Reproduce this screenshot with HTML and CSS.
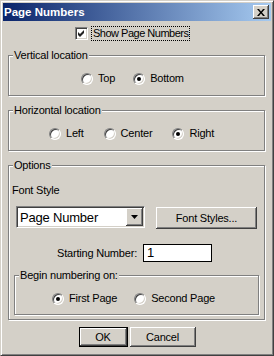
FILE: index.html
```html
<!DOCTYPE html>
<html lang="en">
<head>
  <meta charset="UTF-8" />
  <title>Page Numbers</title>
  <link rel="stylesheet" href="styles.css">
</head>
<body>
  <div class="window">
    <div class="titlebar">
      <span class="title">Page Numbers</span>
      <span class="close-btn">
        <svg width="8" height="7" viewBox="0 0 8 7"><polygon points="0,0 2,0 4,2.5 6,0 8,0 5,3.5 8,7 6,7 4,4.5 2,7 0,7 3,3.5" fill="#000"/></svg>
      </span>
    </div>

    <div class="dialog">
      <div class="check-row">
        <span class="checkbox">
          <svg width="7" height="7" viewBox="0 0 7 7"><polygon points="0,2 2,4 6,0 6,3 2,7 0,5" fill="#222"/></svg>
        </span>
        <span class="focus-label">Show Page Numbers</span>
      </div>

      <div class="group">
        <span class="group-title">Vertical location</span>
        <div class="radio-row vertical-row">
          <span class="radio-item"><span class="radio"></span>Top</span>
          <span class="radio-item"><span class="radio on"></span>Bottom</span>
        </div>
      </div>

      <div class="group">
        <span class="group-title">Horizontal location</span>
        <div class="radio-row horizontal-row">
          <span class="radio-item"><span class="radio"></span>Left</span>
          <span class="radio-item"><span class="radio"></span>Center</span>
          <span class="radio-item"><span class="radio on"></span>Right</span>
        </div>
      </div>

      <div class="group options">
        <span class="group-title">Options</span>
        <div class="field-label">Font Style</div>
        <div class="font-row">
          <div class="select">
            <span>Page Number</span>
            <span class="select-arrow">
              <svg width="7" height="4" viewBox="0 0 7 4"><polygon points="0,0 7,0 3.5,4" fill="#000"/></svg>
            </span>
          </div>
          <button class="btn font-btn">Font Styles...</button>
        </div>
        <div class="start-row">
          <span class="start-label">Starting Number:</span>
          <span class="text-input">1</span>
        </div>
        <div class="group inner-group">
          <span class="group-title">Begin numbering on:</span>
          <div class="radio-row begin-row">
            <span class="radio-item"><span class="radio on"></span>First Page</span>
            <span class="radio-item"><span class="radio"></span>Second Page</span>
          </div>
        </div>
      </div>

      <div class="button-row">
        <button class="btn btn-default">OK</button>
        <button class="btn cancel-btn">Cancel</button>
      </div>
    </div>
  </div>
</body>
</html>
```

FILE: styles.css
```css
* { box-sizing: border-box; }
body {
  margin: 0;
  background: #d4d0c8;
  font-family: 'Liberation Sans', Arial, sans-serif;
  font-size: 11px;
  line-height: 13px;
  letter-spacing: -0.2px;
  color: #000;
}
.window {
  width: 274px;
  height: 356px;
  padding: 2px;
  background: #d4d0c8;
  border: 1px solid;
  border-color: #d4d0c8 #404040 #404040 #d4d0c8;
  box-shadow: inset 1px 1px 0 #fff, inset -1px -1px 0 #808080;
}
.titlebar {
  height: 18px;
  display: flex;
  align-items: center;
  justify-content: space-between;
  padding: 0 2px 0 1px;
  background: linear-gradient(90deg, #0a246a, #a6caf0);
}
.title {
  color: #fff;
  font-weight: bold;
  font-size: 11.5px;
  letter-spacing: 0;
}
.close-btn {
  width: 16px;
  height: 14px;
  display: flex;
  align-items: center;
  justify-content: center;
  background: #d4d0c8;
  box-shadow: inset -1px -1px 0 #404040, inset 1px 1px 0 #fff, inset -2px -2px 0 #808080;
}
.dialog {
  padding-top: 5px;
}
.check-row {
  display: flex;
  align-items: center;
  height: 15px;
  margin-left: 72px;
  gap: 3px;
}
.checkbox {
  width: 13px;
  height: 13px;
  display: flex;
  align-items: center;
  justify-content: center;
  background: #fff;
  border: 1px solid;
  border-color: #808080 #fff #fff #808080;
  box-shadow: inset 1px 1px 0 #404040, inset -1px -1px 0 #d4d0c8;
}
.focus-label {
  border: 1px dotted #000;
  padding: 0 1px;
  letter-spacing: -0.5px;
}

.group {
  position: relative;
  height: 41px;
  margin: 14px 6px 0 5px;
  padding-top: 16px;
  border: 1px solid #808080;
  box-shadow: inset 1px 1px 0 #fff, 1px 1px 0 #fff;
}
.group-title {
  position: absolute;
  top: -7px;
  left: 4px;
  padding: 0 1px;
  background: #d4d0c8;
}
.radio-row {
  display: flex;
  align-items: center;
  height: 13px;
}
.vertical-row { padding-left: 72px; gap: 18px; }
.horizontal-row { padding-left: 40px; gap: 20px; }
.begin-row { padding-left: 37px; gap: 17px; }
.radio-item {
  display: flex;
  align-items: center;
}
.radio {
  position: relative;
  width: 12px;
  height: 12px;
  margin-right: 5px;
  border-radius: 50%;
  background: #fff;
  border: 1px solid;
  border-color: #808080 #fff #fff #808080;
  box-shadow: inset 1px 1px 0 #404040, inset -1px -1px 0 #d4d0c8;
}
.radio.on::after {
  content: '';
  position: absolute;
  left: 3px;
  top: 3px;
  width: 4px;
  height: 4px;
  border-radius: 50%;
  background: #000;
}

.options {
  height: 155px;
  padding: 18px 0 0 3px;
}
.field-label {
  height: 13px;
}
.font-row {
  display: flex;
  align-items: flex-start;
  gap: 11px;
  margin: 9px 0 0 4px;
}
.select {
  width: 129px;
  height: 22px;
  display: flex;
  align-items: center;
  justify-content: space-between;
  padding: 0 1px 0 3px;
  font-size: 13px;
  background: #fff;
  border: 1px solid;
  border-color: #808080 #fff #fff #808080;
  box-shadow: inset 1px 1px 0 #404040, inset -1px -1px 0 #d4d0c8;
}
.select-arrow {
  width: 17px;
  height: 18px;
  display: flex;
  align-items: center;
  justify-content: center;
  background: #d4d0c8;
  box-shadow: inset -1px -1px 0 #404040, inset 1px 1px 0 #fff, inset -2px -2px 0 #808080;
}
.btn {
  height: 22px;
  padding: 0;
  font-family: inherit;
  font-size: 11px;
  letter-spacing: inherit;
  color: #000;
  background: #d4d0c8;
  border: none;
  box-shadow: inset -1px -1px 0 #404040, inset 1px 1px 0 #fff, inset -2px -2px 0 #808080;
}
.font-btn {
  width: 101px;
  margin-top: 1px;
}
.start-row {
  display: grid;
  grid-template-columns: 125px 69px;
  gap: 6px;
  align-items: center;
  margin-top: 15px;
}
.start-label {
  text-align: right;
}
.text-input {
  height: 18px;
  padding-left: 3px;
  font-size: 13px;
  line-height: 16px;
  background: #fff;
  border: 1px solid #000;
}
.inner-group {
  width: 245px;
  height: 40px;
  margin: 13px 0 0 2px;
}
.button-row {
  display: flex;
  justify-content: center;
  gap: 2px;
  margin-top: 7px;
}
.button-row .btn {
  height: 20px;
}
.btn-default {
  width: 49px;
  outline: 1px solid #000;
  outline-offset: -1px;
  box-shadow: inset -2px -2px 0 #404040, inset 2px 2px 0 #fff, inset -3px -3px 0 #808080;
}
.cancel-btn {
  width: 66px;
}
```
